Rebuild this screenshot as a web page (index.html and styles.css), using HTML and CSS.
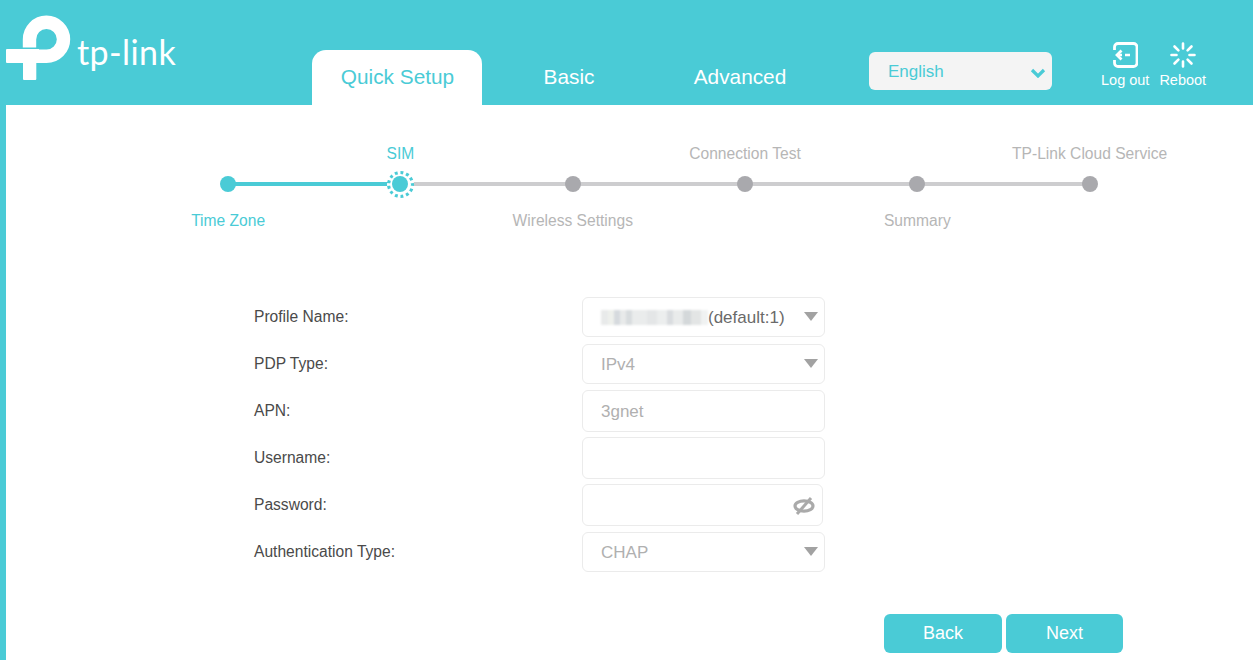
FILE: index.html
```html
<!DOCTYPE html>
<html lang="en">
<head>
<meta charset="utf-8">
<title>TP-Link Quick Setup</title>
<link rel="stylesheet" href="styles.css">
</head>
<body>
<header class="top">
  <div class="logo">
    <svg class="logo-mark" width="72" height="70" viewBox="0 10 72 70" aria-hidden="true">
      <path d="M29.5 47.500V39.5A17 17 0 1 1 46.5 56.300H38" fill="none" stroke="#fff" stroke-width="13.400"/>
      <path d="M7 49h32v14H36.300v16a1 1 0 0 1-1 1H24a1 1 0 0 1-1-1V63H7a1 1 0 0 1-1-1V50a1 1 0 0 1 1-1z" fill="#fff"/>
    </svg>
    <span class="logo-text">tp-link</span>
  </div>
  <nav class="tabs">
    <a class="tab active">Quick Setup</a>
    <a class="tab">Basic</a>
    <a class="tab">Advanced</a>
  </nav>
  <div class="lang">
    <span>English</span>
    <svg width="16" height="10" viewBox="0 0 16 10" aria-hidden="true"><path d="M2 2l6 6 6-6" fill="none" stroke="#4acbd6" stroke-width="3.200"/></svg>
  </div>
  <div class="actions">
    <div class="action action-logout">
      <svg width="26" height="26" viewBox="0 0 26 26" aria-hidden="true">
        <path d="M2.500 8V5A3.500 3.500 0 0 1 6 1.500h15.500A3.500 3.500 0 0 1 25 5v16a3.500 3.500 0 0 1-3.500 3.500H6A3.500 3.500 0 0 1 2.500 21v-3" fill="none" stroke="#fff" stroke-width="2.800"/>
        <path d="M9.500 8.500L5 13l4.500 4.500" fill="none" stroke="#fff" stroke-width="2.800"/>
        <path d="M7 13h3M13 13h5" fill="none" stroke="#fff" stroke-width="2.600"/>
      </svg>
      <span>Log out</span>
    </div>
    <div class="action">
      <svg width="26" height="26" viewBox="0 0 26 26" aria-hidden="true">
        <g fill="none" stroke="#fff" stroke-width="2.600" stroke-linecap="round">
          <path d="M13 1.500V6.500M13 19.500V24.500M1.500 13H6.500M19.500 13H24.500M4.500 4.500L8.400 8.400M17.600 17.600L21.500 21.500M21.500 4.500L17.600 8.400M8.400 17.600L4.500 21.500"/>
        </g>
      </svg>
      <span>Reboot</span>
    </div>
  </div>
</header>

<main class="content">
  <ol class="stepper">
    <li class="step done"><span class="top-label"></span><span class="dot"></span><span class="bottom-label">Time Zone</span></li>
    <li class="step current"><span class="top-label">SIM</span><span class="dot"></span><span class="bottom-label"></span></li>
    <li class="step"><span class="top-label"></span><span class="dot"></span><span class="bottom-label">Wireless Settings</span></li>
    <li class="step"><span class="top-label">Connection Test</span><span class="dot"></span><span class="bottom-label"></span></li>
    <li class="step"><span class="top-label"></span><span class="dot"></span><span class="bottom-label">Summary</span></li>
    <li class="step"><span class="top-label">TP-Link Cloud Service</span><span class="dot"></span><span class="bottom-label"></span></li>
  </ol>

  <form class="form">
    <div class="row">
      <label>Profile Name:</label>
      <div class="field select"><span class="redacted"></span><span class="dark">(default:1)</span><i class="caret"></i></div>
    </div>
    <div class="row">
      <label>PDP Type:</label>
      <div class="field select"><span>IPv4</span><i class="caret"></i></div>
    </div>
    <div class="row">
      <label>APN:</label>
      <div class="field input"><span>3gnet</span></div>
    </div>
    <div class="row">
      <label>Username:</label>
      <div class="field input"></div>
    </div>
    <div class="row">
      <label>Password:</label>
      <div class="field input pass">
        <svg class="eye" width="24" height="20" viewBox="0 0 24 20" aria-hidden="true">
          <ellipse cx="12" cy="10" rx="9" ry="5.200" fill="none" stroke="#aaa" stroke-width="3.200"/>
          <path d="M5 18L19 2" stroke="#aaa" stroke-width="3"/>
        </svg>
      </div>
    </div>
    <div class="row">
      <label>Authentication Type:</label>
      <div class="field select"><span>CHAP</span><i class="caret"></i></div>
    </div>
  </form>

  <div class="buttons">
    <button type="button" class="btn back">Back</button>
    <button type="button" class="btn next">Next</button>
  </div>
</main>
</body>
</html>
```
FILE: styles.css
```css
* { box-sizing: border-box; }
html, body { margin: 0; padding: 0; height: 660px; overflow: hidden; }
body {
  font-family: "Liberation Sans", Arial, sans-serif;
  background: #4acbd6;
  color: #4a4a4a;
}
.top {
  height: 105px;
  display: flex;
  align-items: flex-start;
  color: #fff;
}
.logo {
  width: 312px;
  height: 105px;
  padding-top: 10px;
  display: flex;
  align-items: flex-start;
}
.logo-mark { flex: none; margin-right: 5px; }
.logo-text {
  font-family: Lato, sans-serif;
  font-size: 34px;
  line-height: 40px;
  margin-top: 22px;
  letter-spacing: 0.4px;
  font-weight: 400;
}
.tabs { display: flex; margin-top: 50px; height: 55px; width: 513px; }
.tab {
  width: 171px;
  padding: 0 0 2px 1px;
  display: flex;
  align-items: center;
  justify-content: center;
  font-size: 20.800px;
  border-radius: 14px 14px 0 0;
}
.tab.active { background: #fff; color: #4acbd6; width: 170px; margin-right: 1px; }
.lang {
  width: 183px;
  height: 38px;
  margin: 52px 0 0 44px;
  background: #f4f4f4;
  border-radius: 6px;
  display: flex;
  align-items: center;
  justify-content: space-between;
  padding: 2px 6px 0 19px;
  color: #4acbd6;
  font-size: 17px;
}
.lang svg { margin-top: 1px; }
.actions { display: flex; margin: 42px 0 0 49px; gap: 10px; }
.action {
  display: flex;
  flex-direction: column;
  align-items: center;
  font-size: 14.500px;
  line-height: 18px;
  gap: 3px;
}
.action svg { display: block; }
.content {
  margin-left: 6px;
  height: 555px;
  background: #fff;
  position: relative;
}
.stepper {
  list-style: none;
  margin: 0 0 0 136px;
  padding: 38px 0 0;
  display: grid;
  grid-template-columns: repeat(6, 172.300px);
}
.step {
  display: flex;
  flex-direction: column;
  align-items: center;
  color: #b6b6b6;
  font-size: 15.600px;
  position: relative;
}
.top-label { height: 21px; padding-top: 1px; line-height: 20px; white-space: nowrap; }
.bottom-label { height: 20px; line-height: 20px; white-space: nowrap; }
.dot {
  width: 16px;
  height: 16px;
  border-radius: 50%;
  background: #a9a9ad;
  margin: 12px 0 19px;
  position: relative;
  z-index: 1;
}
.step::after {
  content: "";
  position: absolute;
  top: 39px;
  left: 50%;
  width: 100%;
  height: 4px;
  background: #cdcdcf;
}
.step:last-child::after { display: none; }
.done, .current { color: #4acbd6; }
.done .dot { background: #4acbd6; }
.current .dot { background: transparent; }
.done::after { background: #4acbd6; }
.current .dot::before {
  content: "";
  position: absolute;
  inset: 0;
  background: #4acbd6;
  border-radius: 50%;
  z-index: 1;
}
.current .dot::after {
  content: "";
  position: absolute;
  inset: -5.500px;
  border: 3px dotted #4acbd6;
  border-radius: 50%;
  background: #fff;
}
.form { margin: 62px 0 0 248px; }
.row {
  display: flex;
  align-items: center;
  height: 47px;
}
.row label { width: 328px; font-size: 15.600px; }
.field {
  width: 243px;
  margin-top: 1px;
  border: 1px solid #ebebeb;
  border-radius: 6px;
  background: #fff;
  display: flex;
  align-items: center;
  padding: 1px 10px 0 18px;
  font-size: 17px;
  color: #b0b0b0;
  position: relative;
}
.select { height: 40px; padding-top: 2px; }
.input { height: 42px; }
.pass { width: 241px; justify-content: flex-end; padding-right: 6px; }
.dark { color: #6a6a6a; }
.caret {
  position: absolute;
  right: 6px;
  top: 14px;
  width: 0;
  height: 0;
  border-left: 7.500px solid transparent;
  border-right: 7.500px solid transparent;
  border-top: 9px solid #a2a2a2;
}
.redacted {
  width: 107px;
  height: 15px;
  flex: none;
  margin-top: -1px;
  filter: blur(0.8px);
  background:
    linear-gradient(90deg,
      #e8eaea 0 7px, #eef0ec 7px 13px, #d6dade 13px 19px, #e8eaea 19px 25px, #d8dcde 25px 31px,
      #eaecec 31px 46px, #e4e6e7 46px 56px, #eceeee 56px 66px, #d9dcdf 66px 72px, #e9ebeb 72px 82px,
      #d4d8da 82px 90px, #e3e5e5 90px 100px, #f0f2f2 100px 107px);
}
.buttons {
  position: absolute;
  left: 878px;
  top: 509px;
  display: flex;
  gap: 4px;
}
.btn {
  width: 118px;
  height: 39px;
  border: 0;
  border-radius: 6px;
  background: #4acbd6;
  color: #fff;
  font: 18px "Liberation Sans", Arial, sans-serif;
  padding: 0;
}
.btn.next { width: 117px; }
```
